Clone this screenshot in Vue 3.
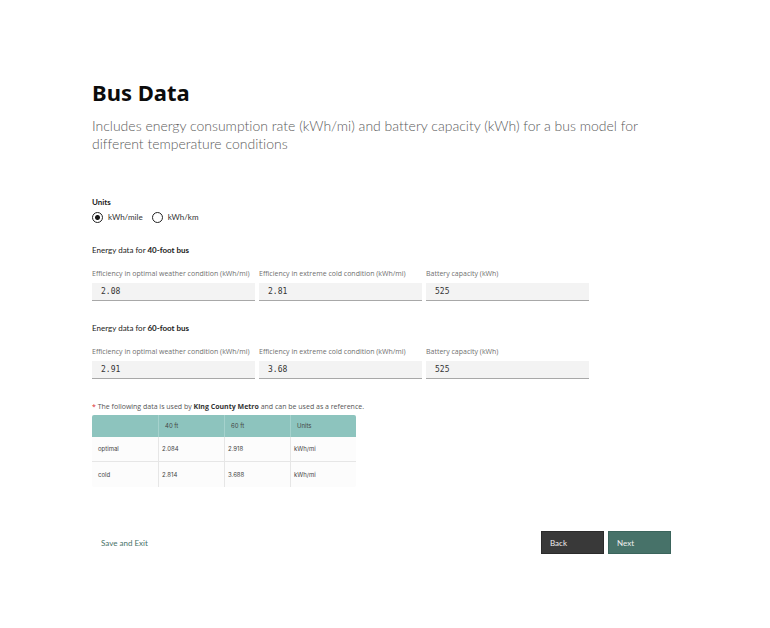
<script setup>
import { reactive, ref } from 'vue'

const unit = ref('mile')
const units = [
  { value: 'mile', label: 'kWh/mile' },
  { value: 'km', label: 'kWh/km' },
]

const buses = reactive([
  {
    id: 'bus40',
    name: '40-foot bus',
    fields: [
      { key: 'optimal', label: 'Efficiency in optimal weather condition (kWh/mi)', value: '2.08' },
      { key: 'cold', label: 'Efficiency in extreme cold condition (kWh/mi)', value: '2.81' },
      { key: 'battery', label: 'Battery capacity (kWh)', value: '525' },
    ],
  },
  {
    id: 'bus60',
    name: '60-foot bus',
    fields: [
      { key: 'optimal', label: 'Efficiency in optimal weather condition (kWh/mi)', value: '2.91' },
      { key: 'cold', label: 'Efficiency in extreme cold condition (kWh/mi)', value: '3.68' },
      { key: 'battery', label: 'Battery capacity (kWh)', value: '525' },
    ],
  },
])

const rows = [
  ['optimal', '2.084', '2.918', 'kWh/mi'],
  ['cold', '2.814', '3.688', 'kWh/mi'],
]
</script>

<template>
  <main class="page">
    <h1>Bus Data</h1>
    <p class="intro">
      Includes energy consumption rate (kWh/mi) and battery capacity (kWh) for a bus model for
      different temperature conditions
    </p>

    <fieldset class="units">
      <legend>Units</legend>
      <div class="radios">
        <label v-for="u in units" :key="u.value" class="radio">
          <input v-model="unit" type="radio" name="unit" :value="u.value" />
          <span>{{ u.label }}</span>
        </label>
      </div>
    </fieldset>

    <section v-for="bus in buses" :key="bus.id" class="bus">
      <h2>Energy data for <strong>{{ bus.name }}</strong></h2>
      <div class="fields">
        <div v-for="f in bus.fields" :key="f.key" class="field">
          <label :for="`${bus.id}-${f.key}`">{{ f.label }}</label>
          <input :id="`${bus.id}-${f.key}`" v-model="f.value" type="text" />
        </div>
      </div>
    </section>

    <section class="reference">
      <p class="note">
        <span class="star">*</span> The following data is used by <strong>King County Metro</strong> and can be used as a reference.
      </p>
      <table>
        <thead>
          <tr><th></th><th>40 ft</th><th>60 ft</th><th>Units</th></tr>
        </thead>
        <tbody>
          <tr v-for="row in rows" :key="row[0]">
            <td v-for="(cell, i) in row" :key="i">{{ cell }}</td>
          </tr>
        </tbody>
      </table>
    </section>

    <footer class="actions">
      <button type="button" class="link">Save and Exit</button>
      <button type="button" class="back">Back</button>
      <button type="button" class="next">Next</button>
    </footer>
  </main>
</template>

<style>
body {
  margin: 0;
  background: #fff;
}
</style>

<style scoped>
.page {
  box-sizing: border-box;
  padding: 77px 99px 40px 92px;
  color: #222;
  font-family: Lato, "Noto Sans", sans-serif;
  font-size: 8px;
  font-variant-ligatures: none;
  line-height: 12px;
}
h1 {
  margin: 0 0 10px;
  color: #0c0c0c;
  font-family: "Noto Sans", sans-serif;
  font-size: 22px;
  font-weight: 700;
  line-height: 30px;
}
.intro {
  margin: 0;
  max-width: 570px;
  color: #5c5c5c;
  font-size: 14px;
  font-weight: 300;
  line-height: 18px;
}
.units {
  margin: 43px 0 0;
  padding: 0;
  border: 0;
}
legend {
  padding: 0;
  font-weight: 700;
}
.radios {
  display: flex;
  gap: 9px;
  margin-top: 3px;
}
.radio {
  display: flex;
  align-items: center;
  gap: 5px;
  color: #333;
}
.radio input {
  appearance: none;
  box-sizing: border-box;
  width: 11px;
  height: 11px;
  margin: 0;
  border: 1px solid #222;
  border-radius: 50%;
}
.radio input:checked {
  background: radial-gradient(circle, #161616 2px, transparent 3px);
}
.bus {
  margin-top: 21px;
}
h2 {
  margin: 0;
  font-size: 8px;
  font-weight: 400;
  line-height: 12px;
}
.fields {
  display: grid;
  grid-template-columns: repeat(3, 1fr);
  gap: 4px;
  max-width: 497px;
  margin-top: 12px;
}
.field label {
  display: block;
  color: #6f6f6f;
  font-family: "Open Sans", sans-serif;
  font-size: 7px;
  white-space: nowrap;
}
.field input {
  display: block;
  box-sizing: border-box;
  width: 100%;
  height: 18px;
  margin: 3px 0 0;
  padding: 0 9px;
  border: 0;
  border-bottom: 1px solid #a8a8a8;
  border-radius: 0;
  background: #f3f3f3;
  color: #333;
  font-family: "DejaVu Sans Mono", monospace;
  font-size: 8px;
}
.reference {
  margin-top: 22px;
}
.note {
  margin: 0 0 2px;
  color: #555;
  font-family: "Open Sans", sans-serif;
  font-size: 7px;
}
.note strong {
  color: #333;
}
.star {
  color: #da1e28;
}
table {
  width: 264px;
  overflow: hidden;
  border-collapse: separate;
  border-spacing: 0;
  border-radius: 2px;
  table-layout: fixed;
  color: #444;
  font-family: Inter, sans-serif;
  font-size: 6px;
  line-height: 8px;
}
th,
td {
  box-sizing: border-box;
  border-left: 1px solid #e6e6e6;
  text-align: left;
  font-weight: 400;
}
th {
  height: 22px;
  padding: 0 6px;
  border-color: #a5d2cd;
  background: #8dc4be;
}
td {
  height: 25px;
  padding: 0 3px;
  background: #fcfcfc;
}
td:first-child {
  padding-left: 6px;
}
th:first-child,
td:first-child {
  border-left: 0;
}
tbody tr:first-child td {
  border-bottom: 1px solid #e6e6e6;
}
.actions {
  display: flex;
  align-items: center;
  gap: 4px;
  margin-top: 44px;
}
button {
  box-sizing: border-box;
  width: 63px;
  height: 23px;
  padding: 0 9px;
  border: 0;
  font-family: inherit;
  font-size: 8px;
  line-height: 12px;
  text-align: left;
}
.link {
  width: auto;
  margin-right: auto;
  background: none;
  color: #477269;
}
.back {
  padding: 0 8px;
  border: 1px solid #2b2b2b;
  background: #393939;
  color: #eee;
}
.next {
  padding: 0 8px;
  border: 1px solid #3b645c;
  background: #477269;
  color: #eee;
}
</style>
